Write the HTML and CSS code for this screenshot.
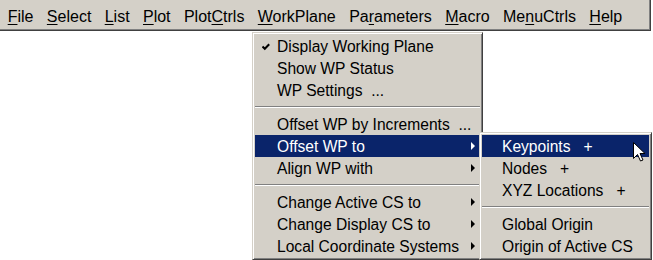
FILE: index.html
```html
<!DOCTYPE html>
<html lang="en">
<head>
    <meta charset="UTF-8">
    <title>WorkPlane menu</title>
    <link rel="stylesheet" href="styles.css">
</head>
<body>
    <div class="menubar">
        <span class="mb-item"><u>F</u>ile</span>
        <span class="mb-item"><u>S</u>elect</span>
        <span class="mb-item"><u>L</u>ist</span>
        <span class="mb-item"><u>P</u>lot</span>
        <span class="mb-item">Plot<u>C</u>trls</span>
        <span class="mb-item"><u>W</u>orkPlane</span>
        <span class="mb-item">Pa<u>r</u>ameters</span>
        <span class="mb-item"><u>M</u>acro</span>
        <span class="mb-item">Me<u>n</u>uCtrls</span>
        <span class="mb-item"><u>H</u>elp</span>
    </div>

    <div class="desk">
        <div class="menu main-menu">
            <div class="item"><svg class="check" width="8" height="8" viewBox="0 0 8 8"><path d="M0.5 3.5 L2.8 5.8 L7.2 1.2" fill="none" stroke="#000" stroke-width="2"/></svg>Display Working Plane</div>
            <div class="item">Show WP Status</div>
            <div class="item">WP Settings  ...</div>
            <div class="sep"></div>
            <div class="item">Offset WP by Increments  ...</div>
            <div class="item active">Offset WP to<span class="arrow"></span></div>
            <div class="item">Align WP with<span class="arrow"></span></div>
            <div class="sep"></div>
            <div class="item">Change Active CS to<span class="arrow"></span></div>
            <div class="item">Change Display CS to<span class="arrow"></span></div>
            <div class="item">Local Coordinate Systems<span class="arrow"></span></div>
        </div>

        <div class="menu sub-menu">
            <div class="item active">Keypoints   +</div>
            <div class="item">Nodes   +</div>
            <div class="item">XYZ Locations   +</div>
            <div class="sep"></div>
            <div class="item">Global Origin</div>
            <div class="item">Origin of Active CS</div>
        </div>

        <!-- mouse pointer -->
        <svg class="pointer" width="13" height="20" viewBox="0 0 13 20">
            <path d="M0.5 0.5 L0.5 16.5 L4.5 12.5 L7.5 19 L10 18 L7 11.5 L12 11.5 Z" fill="#fff" stroke="#000" stroke-width="1"/>
        </svg>
    </div>
</body>
</html>
```

FILE: styles.css
```css
/* General */
body {
    margin: 0;
    padding: 0;
    background: #fff;
    font-family: "Liberation Sans", Arial, sans-serif;
    font-size: 16px;
    color: #000;
}

u {
    text-decoration: underline;
    text-underline-offset: 2px;
}

/* Menu bar */
.menubar {
    display: flex;
    align-items: center;
    box-sizing: border-box;
    width: 651px;
    height: 31px;
    padding: 3px 0 0 1px;
    background: #d4d0c8;
    border-right: 1px solid #404040;
    border-bottom: 1px solid #404040;
    box-shadow: inset -1px -1px #808080;
}

.mb-item {
    padding: 0 6.7px;
    white-space: nowrap;
}

/* Drop-down menus */
.desk {
    position: relative;
    height: 229px;
}

.menu {
    position: absolute;
    background: #d4d0c8;
    border: 1px solid;
    border-color: #d4d0c8 #404040 #404040 #d4d0c8;
    box-shadow: inset 1px 1px #fff, inset -1px -1px #808080;
    padding: 2px;
    font-size: 15.6px;
}

.main-menu {
    left: 252px;
    top: 1px;
    width: 225px;
}

.sub-menu {
    left: 479px;
    top: 101px;
    width: 167px;
}

.item {
    position: relative;
    display: flex;
    align-items: center;
    height: 22px;
    padding-top: 1px;
    box-sizing: border-box;
    padding-left: 22px;
    white-space: pre;
}

.sub-menu .item {
    padding-left: 20px;
}

.item.active {
    background: #0a246a;
    color: #fff;
}

.check {
    position: absolute;
    left: 7px;
    top: 8px;
}

.arrow {
    position: absolute;
    right: 5px;
    top: 7px;
    width: 0;
    height: 0;
    border-top: 4px solid transparent;
    border-bottom: 4px solid transparent;
    border-left: 4px solid #000;
}

.item.active .arrow {
    border-left-color: #fff;
}

.sep {
    height: 12px;
    display: flex;
    align-items: center;
}

.sep::before {
    content: "";
    display: block;
    width: 100%;
    border-top: 1px solid #808080;
    border-bottom: 1px solid #fff;
}

.pointer {
    position: absolute;
    left: 633px;
    top: 111px;
}
```
